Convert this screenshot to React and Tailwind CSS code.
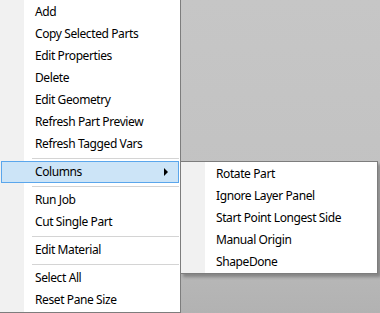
import React from 'react';

const mainItems = [
  { label: 'Add' },
  { label: 'Copy Selected Parts' },
  { label: 'Edit Properties' },
  { label: 'Delete' },
  { label: 'Edit Geometry' },
  { label: 'Refresh Part Preview' },
  { label: 'Refresh Tagged Vars' },
  { sep: true },
  { label: 'Columns', active: true, sub: true },
  { sep: true },
  { label: 'Run Job' },
  { label: 'Cut Single Part' },
  { sep: true },
  { label: 'Edit Material' },
  { sep: true },
  { label: 'Select All' },
  { label: 'Reset Pane Size' },
];

const subItems = [
  'Rotate Part',
  'Ignore Layer Panel',
  'Start Point Longest Side',
  'Manual Origin',
  'ShapeDone',
];

const MenuRow = ({ item }) => {
  if (item.sep) {
    return (
      <div className="h-[6px] pt-[3px] pl-[32px] pr-[1px]">
        <div className="h-px bg-[#d4d4d4]" />
      </div>
    );
  }
  if (item.active) {
    return (
      <div className="ml-[1px] w-[178px] h-[22px] flex items-center pl-[33px] pr-[10px] bg-[#cce4f7] border border-[#5aa6ec]">
        <span>{item.label}</span>
        <svg className="ml-auto" width="4" height="8" viewBox="0 0 4 8">
          <polygon points="0,0 4,4 0,8" fill="#000" />
        </svg>
      </div>
    );
  }
  return (
    <div className="h-[22px] flex items-center pl-[35px]">
      <span>{item.label}</span>
    </div>
  );
};

const App = () => {
  return (
    <div
      className="relative w-[380px] h-[313px] overflow-hidden bg-[linear-gradient(to_bottom,#c6c6c6,#c2c2c2_60%,#b2b2b2)] text-[12px] tracking-[-0.4px] text-black"
      style={{ fontFamily: '"Noto Sans", "Liberation Sans", sans-serif' }}
    >
      {/* main context menu */}
      <div className="w-[181px] h-[313px] pt-[1px] pb-[1px] border-r border-b border-[#7d7d7d] bg-[linear-gradient(to_right,#f1f1f1_24px,#ffffff_24px)]">
        {mainItems.map((item, i) => (
          <MenuRow key={i} item={item} />
        ))}
      </div>

      {/* Columns submenu */}
      <div className="absolute left-[180px] top-[161px] w-[198px] pt-[1px] border border-[#7d7d7d] bg-[linear-gradient(to_right,#f1f1f1_24px,#ffffff_24px)] shadow-[3px_3px_3px_rgba(0,0,0,0.28)]">
        {subItems.map((label) => (
          <div key={label} className="h-[22px] flex items-center pl-[35px]">
            <span>{label}</span>
          </div>
        ))}
      </div>
    </div>
  );
};

export default App;
